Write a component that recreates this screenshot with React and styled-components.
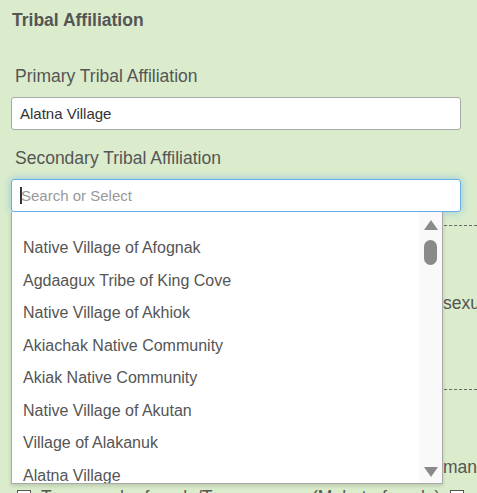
import styled, { createGlobalStyle } from "styled-components";

const tribes = [
  "Native Village of Afognak",
  "Agdaagux Tribe of King Cove",
  "Native Village of Akhiok",
  "Akiachak Native Community",
  "Akiak Native Community",
  "Native Village of Akutan",
  "Village of Alakanuk",
  "Alatna Village",
  "Native Village of Aleknagik",
];

function App() {
  return (
    <Page>
      <GlobalStyle />
      <Heading>Tribal Affiliation</Heading>

      <Label $top={36}>Primary Tribal Affiliation</Label>
      <Field>Alatna Village</Field>

      <Label $top={18}>Secondary Tribal Affiliation</Label>
      <Combo>
        <Field $focused>
          <Caret />
          <Placeholder>Search or Select</Placeholder>
        </Field>

        <ListBox>
          <Options>
            {tribes.map((name) => (
              <Option key={name}>{name}</Option>
            ))}
          </Options>
          <ScrollTrack>
            <Arrow $dir="up" />
            <Thumb />
            <Arrow $dir="down" />
          </ScrollTrack>
        </ListBox>
      </Combo>

      <Behind>
        <Divider $top={13} />
        <PeekRow $top={66}>
          <span>Do you think of yourself as homo</span>
          <span>sexual</span>
        </PeekRow>
        <Divider $top={75} />
        <PeekRow $top={66}>
          <span>Transgender male/Trans</span>
          <span>man/Female-to-male</span>
        </PeekRow>
        <CheckRow>
          <Box />
          Transgender female/Trans woman (Male-to-female) <Box />
        </CheckRow>
      </Behind>
    </Page>
  );
}

export default App;

// ---- styles ---- //

const GlobalStyle = createGlobalStyle`
  html, body {
    margin: 0;
    padding: 0;
    background: #daeccc;
  }
  body {
    font-family: "Liberation Sans", Arial, sans-serif;
    color: #555;
  }
`;

const Page = styled.div`
  width: 477px;
  height: 493px;
  overflow: hidden;
  box-sizing: border-box;
  padding: 10px 16px 0 11px;
  background: #daeccc;
`;

const Heading = styled.div`
  padding-left: 1px;
  font-size: 17.5px;
  font-weight: bold;
  line-height: 20px;
  color: #555;
`;

const Label = styled.div`
  margin-top: ${({ $top }) => $top}px;
  margin-bottom: 11px;
  padding-left: 4px;
  font-size: 17.5px;
  line-height: 20px;
  color: #555;
`;

const Combo = styled.div`
  position: relative;
`;

const Field = styled.div`
  height: 33px;
  box-sizing: border-box;
  display: flex;
  align-items: center;
  padding: 0 8px;
  background: #fff;
  border: 1px solid ${({ $focused }) => ($focused ? "#66afe9" : "#a9a9a9")};
  border-radius: 3px;
  box-shadow: ${({ $focused }) =>
    $focused ? "0 0 8px rgba(102, 175, 233, 0.6)" : "none"};
  font-size: 15px;
  color: #333;
`;

const Caret = styled.span`
  width: 2px;
  height: 17px;
  background: #333;
`;

const Placeholder = styled.span`
  color: #999;
  font-size: 15px;
  margin-left: -1px;
`;

const ListBox = styled.div`
  position: absolute;
  top: 100%;
  left: 0;
  width: 432px;
  height: 272px;
  box-sizing: border-box;
  display: flex;
  background: #fff;
  border: 1px solid #a9a9a9;
  border-top: none;
  box-shadow: 0 2px 4px rgba(0, 0, 0, 0.15);
  z-index: 10;
`;

const Options = styled.ul`
  flex: 1;
  margin: 0;
  padding: 20px 0 0;
  list-style: none;
  overflow: hidden;
`;

const Option = styled.li`
  height: 32.5px;
  line-height: 32.5px;
  padding: 0 11px;
  font-size: 16px;
  color: #555;
  white-space: nowrap;
`;

const ScrollTrack = styled.div`
  width: 23px;
  display: flex;
  flex-direction: column;
  align-items: center;
  padding: 8px 0 6px;
  background: #f9f9f9;
`;

const Arrow = styled.div`
  width: 0;
  height: 0;
  border-left: 7.5px solid transparent;
  border-right: 7.5px solid transparent;
  ${({ $dir }) =>
    $dir === "up"
      ? "border-bottom: 10px solid #8a8a8a;"
      : "border-top: 10px solid #8a8a8a; margin-top: auto;"}
`;

const Thumb = styled.div`
  width: 13px;
  height: 25px;
  margin-top: 10px;
  border-radius: 6.5px;
  background: #8a8a8a;
`;

const Behind = styled.div`
  margin-right: -16px;
`;

const Divider = styled.div`
  margin-top: ${({ $top }) => $top}px;
  border-top: 1px dashed #666;
`;

const PeekRow = styled.div`
  display: grid;
  grid-template-columns: 432px auto;
  margin-top: ${({ $top }) => $top}px;
  font-size: 17.5px;
  line-height: 22px;
  color: #555;
  white-space: nowrap;
`;

const CheckRow = styled.div`
  display: flex;
  align-items: center;
  gap: 10px;
  margin-top: 8px;
  padding-left: 6px;
  font-size: 17.5px;
  line-height: 22px;
  color: #555;
  white-space: nowrap;
`;

const Box = styled.span`
  display: inline-block;
  width: 12px;
  height: 12px;
  border: 1px solid #555;
  background: #fff;
`;
